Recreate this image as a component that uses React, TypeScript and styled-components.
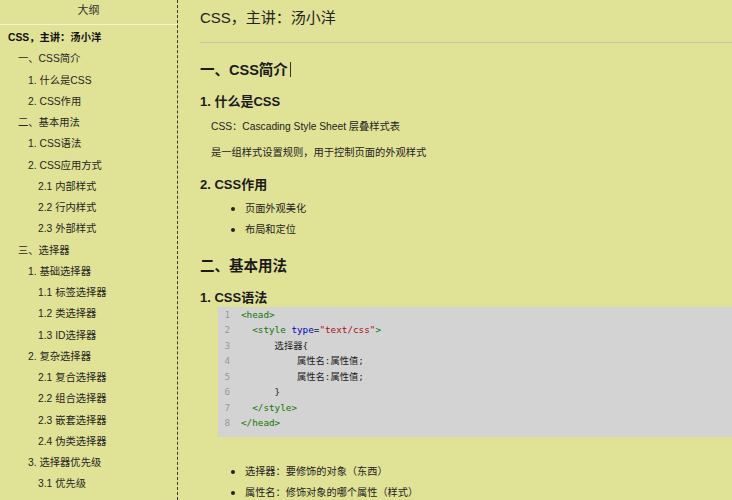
import React from "react";
import styled, { createGlobalStyle } from "styled-components";

const Global = createGlobalStyle`
  html, body { margin: 0; padding: 0; height: 100%; overflow: hidden; }
  body {
    background: #e0e296;
    font-family: "Liberation Sans", "Noto Sans CJK SC", sans-serif;
    color: #333;
  }
`;

const Page = styled.div`
  display: flex;
  height: 500px;
  overflow: hidden;
`;

const Sidebar = styled.aside`
  width: 177px;
  flex: none;
  border-right: 1px dashed #3a3a2a;
  overflow: hidden;
`;

const SideHeader = styled.div`
  height: 24px;
  line-height: 20px;
  text-align: center;
  font-size: 11px;
  color: #333;
  border-bottom: 1px solid #f2f2d8;
`;

const OutlineList = styled.div`
  padding-top: 2px;
`;

const OutlineItem = styled.div<{ $level: number; $bold?: boolean }>`
  height: 21.25px;
  line-height: 21.25px;
  padding-left: ${(p) => 8 + p.$level * 10}px;
  font-size: 10.3px;
  font-weight: ${(p) => (p.$bold ? 700 : 400)};
  color: ${(p) => (p.$bold ? "#111" : "#26261f")};
  white-space: nowrap;
`;

const Main = styled.main`
  flex: 1;
  min-width: 0;
  padding-left: 22px;
  overflow: hidden;
`;

const DocTitle = styled.div`
  height: 36px;
  line-height: 36px;
  font-size: 15px;
  color: #222;
`;

const Rule = styled.div`
  margin-top: 6px;
  height: 1px;
  background: #c4c4b4;
`;

const H1 = styled.h1<{ $mt: number }>`
  margin: ${(p) => p.$mt}px 0 0;
  font-size: 14.5px;
  line-height: 20px;
  font-weight: 700;
  color: #1a1a1a;
`;

const Caret = styled.span`
  display: inline-block;
  width: 1px;
  height: 15px;
  margin-left: 2px;
  vertical-align: -2px;
  background: #333;
`;

const H3 = styled.h3<{ $mt: number }>`
  margin: ${(p) => p.$mt}px 0 0;
  font-size: 13px;
  line-height: 18px;
  font-weight: 700;
  color: #1a1a1a;
`;

const Para = styled.p<{ $mt: number }>`
  margin: ${(p) => p.$mt}px 0 0;
  padding-left: 11px;
  font-size: 10.25px;
  line-height: 16px;
  color: #222;
`;

const List = styled.ul<{ $mt: number }>`
  list-style: none;
  margin: ${(p) => p.$mt}px 0 0;
  padding: 0 0 0 31px;
  display: flex;
  flex-direction: column;
  gap: 5px;
`;

const ListItem = styled.li`
  display: flex;
  align-items: center;
  gap: 10px;
  font-size: 10.2px;
  line-height: 16px;
  color: #222;
`;

const Dot = styled.span`
  width: 4px;
  height: 4px;
  border-radius: 50%;
  background: #222;
  flex: none;
`;

const CodeBlock = styled.div`
  margin-left: 18px;
  background: #d3d3d3;
  padding: 0 0 7px;
  font-family: "DejaVu Sans Mono", "Noto Sans CJK SC", monospace;
  font-size: 9.3px;
`;

const CodeLine = styled.div`
  display: flex;
  height: 15.43px;
  line-height: 15.43px;
  white-space: pre;
`;

const Gutter = styled.span`
  width: 23px;
  box-sizing: border-box;
  padding-right: 11px;
  text-align: right;
  color: #999;
  flex: none;
`;

const Code = styled.span`
  color: #222;
`;

const Tag = styled.span`
  color: #117700;
`;
const Attr = styled.span`
  color: #0000cc;
`;
const Str = styled.span`
  color: #aa1111;
`;

const outline: [number, string, boolean?][] = [
  [0, "CSS，主讲：汤小洋", true],
  [1, "一、CSS简介"],
  [2, "1. 什么是CSS"],
  [2, "2. CSS作用"],
  [1, "二、基本用法"],
  [2, "1. CSS语法"],
  [2, "2. CSS应用方式"],
  [3, "2.1 内部样式"],
  [3, "2.2 行内样式"],
  [3, "2.3 外部样式"],
  [1, "三、选择器"],
  [2, "1. 基础选择器"],
  [3, "1.1 标签选择器"],
  [3, "1.2 类选择器"],
  [3, "1.3 ID选择器"],
  [2, "2. 复杂选择器"],
  [3, "2.1 复合选择器"],
  [3, "2.2 组合选择器"],
  [3, "2.3 嵌套选择器"],
  [3, "2.4 伪类选择器"],
  [2, "3. 选择器优先级"],
  [3, "3.1 优先级"],
];

const codeLines: React.ReactNode[] = [
  <Tag>&lt;head&gt;</Tag>,
  <>
    {"  "}
    <Tag>&lt;style</Tag> <Attr>type</Attr>=<Str>"text/css"</Str>
    <Tag>&gt;</Tag>
  </>,
  <>{"      选择器{"}</>,
  <>{"          属性名:属性值;"}</>,
  <>{"          属性名:属性值;"}</>,
  <>{"      }"}</>,
  <>
    {"  "}
    <Tag>&lt;/style&gt;</Tag>
  </>,
  <Tag>&lt;/head&gt;</Tag>,
];

export default function App() {
  return (
    <>
      <Global />
      <Page>
        <Sidebar>
          <SideHeader>大纲</SideHeader>
          <OutlineList>
            {outline.map(([lv, text, bold], i) => (
              <OutlineItem key={i} $level={lv} $bold={bold}>
                {text}
              </OutlineItem>
            ))}
          </OutlineList>
        </Sidebar>
        <Main>
          <DocTitle>CSS，主讲：汤小洋</DocTitle>
          <Rule />
          <H1 $mt={17}>
            一、CSS简介
            <Caret />
          </H1>
          <H3 $mt={13}>1. 什么是CSS</H3>
          <Para $mt={8}>CSS：Cascading Style Sheet 层叠样式表</Para>
          <Para $mt={10}>是一组样式设置规则，用于控制页面的外观样式</Para>
          <H3 $mt={15}>2. CSS作用</H3>
          <List $mt={7}>
            <ListItem>
              <Dot />
              页面外观美化
            </ListItem>
            <ListItem>
              <Dot />
              布局和定位
            </ListItem>
          </List>
          <H1 $mt={18}>二、基本用法</H1>
          <H3 $mt={13}>1. CSS语法</H3>
          <CodeBlock>
            {codeLines.map((c, i) => (
              <CodeLine key={i}>
                <Gutter>{i + 1}</Gutter>
                <Code>{c}</Code>
              </CodeLine>
            ))}
          </CodeBlock>
          <List $mt={27}>
            <ListItem>
              <Dot />
              选择器：要修饰的对象（东西）
            </ListItem>
            <ListItem>
              <Dot />
              属性名：修饰对象的哪个属性（样式）
            </ListItem>
          </List>
        </Main>
      </Page>
    </>
  );
}
